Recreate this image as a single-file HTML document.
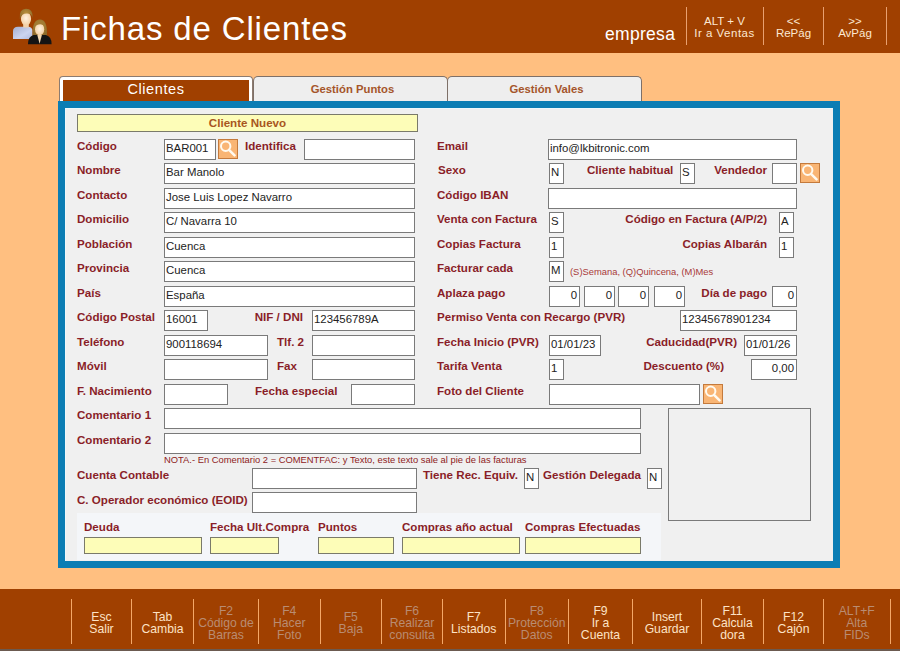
<!DOCTYPE html><html><head><meta charset="utf-8"><title>Fichas de Clientes</title><style>
*{margin:0;padding:0;box-sizing:border-box}
html,body{width:900px;height:651px;overflow:hidden;background:#ffbf80;font-family:"Liberation Sans",sans-serif}
#hd{position:absolute;left:0;top:0;width:900px;height:53px;background:#a04000}
.a{position:absolute}
.lb{position:absolute;font-size:11.6px;line-height:14px;font-weight:bold;color:#8a1e28;white-space:nowrap}
.in{position:absolute;background:#fff;border:1px solid #7a7a7a;font-size:11.4px;line-height:16px;color:#222;padding:0 2px 0 1px;white-space:nowrap;overflow:hidden}
.yl{position:absolute;background:#fdfdb8;border:1px solid #7a7a6a}
.sb{position:absolute;width:20px;height:20px;background:#f9b574;border:1px solid #c47a3c}
.sb svg{position:absolute;left:-1px;top:-1px}
.ft{position:absolute;top:0;height:62px;text-align:center;font-size:12.2px;line-height:12px;color:#fde3c6;white-space:nowrap}
.ft.d{color:#b98c72}
.sep{position:absolute;width:1px;background:#f4a868}
</style></head><body>
<div id="hd"></div>
<svg class="a" style="left:0;top:0" width="60" height="53" viewBox="0 0 60 53">
<defs><linearGradient id="g1" x1="0" y1="0" x2="1" y2="1"><stop offset="0" stop-color="#a4aed0"/><stop offset="0.6" stop-color="#ccd4f0"/><stop offset="1" stop-color="#b0bade"/></linearGradient>
<radialGradient id="sk" cx="0.5" cy="0.45" r="0.6"><stop offset="0" stop-color="#fff2e0"/><stop offset="1" stop-color="#f2cc9e"/></radialGradient>
<radialGradient id="hr" cx="0.5" cy="0.4" r="0.6"><stop offset="0" stop-color="#b8903c"/><stop offset="1" stop-color="#8e6a2a"/></radialGradient></defs>
<path d="M13 39 L13 31 Q13 27 18 26.8 L28 26.8 Q32.5 27 32.5 31 L32.5 39 Z" fill="url(#g1)"/>
<rect x="23.2" y="22" width="5.6" height="5.5" fill="#f2d2ac"/>
<ellipse cx="26" cy="18.8" rx="5.1" ry="6.8" fill="url(#sk)"/>
<path d="M19.8 19 Q18.8 8.8 26 8.8 Q33.2 8.8 32.6 18 Q31.5 13.2 26.5 13.6 Q22 13.5 19.8 19Z" fill="url(#hr)"/>
<path d="M32.6 36 Q32 19.6 40 19.6 Q47.6 19.6 47 36 Z" fill="url(#hr)"/>
<ellipse cx="39.6" cy="29.3" rx="4.6" ry="6.1" fill="url(#sk)"/>
<path d="M34.5 27 Q35 21.5 40 21.5 Q44.5 21.5 44.8 26 Q41 23 37 25 Q35.5 26 34.5 27Z" fill="#a47c34"/>
<path d="M28 44.2 Q28 36.5 33.5 35 L46 35 Q51.6 36.5 51.6 44.2 Z" fill="#141414"/>
<path d="M37.3 35 L39.6 43.8 L41.9 35 Z" fill="#f4d8b0"/>
</svg>
<div class="a" style="left:61px;top:8.5px;font-size:33px;line-height:40px;color:#fff;letter-spacing:0.85px;white-space:nowrap">Fichas de Clientes</div>
<div class="a" style="left:605px;top:21.7px;font-size:17.5px;line-height:24px;color:#fff;letter-spacing:0.3px;white-space:nowrap">empresa</div>
<div class="sep" style="left:686px;top:7px;height:38px;background:#e8a070"></div>
<div class="sep" style="left:763px;top:7px;height:38px;background:#e8a070"></div>
<div class="sep" style="left:823px;top:7px;height:38px;background:#e8a070"></div>
<div class="sep" style="left:886px;top:7px;height:38px;background:#e8a070"></div>
<div class="a" style="left:684.5px;width:80px;top:14.7px;text-align:center;font-size:11.5px;line-height:12.8px;color:#fde8d2;white-space:nowrap">ALT + V<br><span style="letter-spacing:0.5px">Ir a Ventas</span></div>
<div class="a" style="left:753.5px;width:80px;top:14.7px;text-align:center;font-size:11.5px;line-height:12.8px;color:#fde8d2;white-space:nowrap">&lt;&lt;<br>RePág</div>
<div class="a" style="left:815px;width:80px;top:14.7px;text-align:center;font-size:11.5px;line-height:12.8px;color:#fde8d2;white-space:nowrap">&gt;&gt;<br>AvPág</div>
<div class="a" style="left:59px;top:76px;width:194px;height:28px;background:#fff;border:1px solid #8c7b70;border-bottom:none;border-radius:4px 4px 0 0"></div>
<div class="a" style="left:63px;top:80px;width:186px;height:24px;background:#a04000"></div>
<div class="a" style="left:63px;top:81px;width:186px;text-align:center;font-size:14.5px;line-height:17px;color:#fff;letter-spacing:0.6px">Clientes</div>
<div class="a" style="left:253px;top:76px;width:195px;height:28px;background:#eeeeee;border:1px solid #7e7068;border-bottom:none;border-radius:5px 5px 0 0"></div>
<div class="a" style="left:253px;top:82px;width:195px;text-align:center;font-size:11.3px;line-height:14px;font-weight:bold;color:#a5552a;padding-left:4px">Gestión Puntos</div>
<div class="a" style="left:447px;top:76px;width:195px;height:28px;background:#eeeeee;border:1px solid #7e7068;border-bottom:none;border-radius:5px 5px 0 0"></div>
<div class="a" style="left:447px;top:82px;width:195px;text-align:center;font-size:11.3px;line-height:14px;font-weight:bold;color:#a5552a;padding-left:4px">Gestión Vales</div>
<div class="a" style="left:58px;top:101px;width:782px;height:467px;background:#0b7db4"></div>
<div class="a" style="left:65px;top:108px;width:768px;height:453px;background:#f0f0f0;border-left:1px solid #eef8fb;border-top:1px solid #eef8fb"></div>
<div class="yl" style="left:77px;top:114px;width:341px;height:18px"></div>
<div class="a" style="left:77px;top:116px;width:341px;text-align:center;font-size:11.6px;line-height:14px;font-weight:bold;color:#a8561e">Cliente Nuevo</div>
<div class="lb" style="left:77px;top:138.9px">Código</div>
<div class="lb" style="left:77px;top:163.4px">Nombre</div>
<div class="lb" style="left:77px;top:187.9px">Contacto</div>
<div class="lb" style="left:77px;top:212.4px">Domicilio</div>
<div class="lb" style="left:77px;top:236.9px">Población</div>
<div class="lb" style="left:77px;top:261.4px">Provincia</div>
<div class="lb" style="left:77px;top:285.9px">País</div>
<div class="lb" style="left:77px;top:310.4px">Código Postal</div>
<div class="lb" style="left:77px;top:334.9px">Teléfono</div>
<div class="lb" style="left:77px;top:359.4px">Móvil</div>
<div class="lb" style="left:77px;top:383.9px">F. Nacimiento</div>
<div class="lb" style="left:77px;top:408.4px">Comentario 1</div>
<div class="lb" style="left:77px;top:432.9px">Comentario 2</div>
<div class="in" style="left:164px;top:139px;width:52px;height:21px">BAR001</div>
<div class="sb" style="left:218px;top:139px"><svg width="20" height="20" viewBox="0 0 20 20"><circle cx="7.7" cy="7.3" r="4.7" fill="none" stroke="#fffaf0" stroke-width="2"/><line x1="11" y1="10.8" x2="16.6" y2="16.4" stroke="#fffaf0" stroke-width="2.5" stroke-linecap="round"/></svg></div>
<div class="lb" style="left:245px;top:138.9px">Identifica</div>
<div class="in" style="left:304px;top:139px;width:111px;height:21px"></div>
<div class="in" style="left:164px;top:163px;width:251px;height:21px">Bar Manolo</div>
<div class="in" style="left:164px;top:188px;width:251px;height:21px">Jose Luis Lopez Navarro</div>
<div class="in" style="left:164px;top:212px;width:251px;height:21px">C/ Navarra 10</div>
<div class="in" style="left:164px;top:237px;width:251px;height:21px">Cuenca</div>
<div class="in" style="left:164px;top:261px;width:251px;height:21px">Cuenca</div>
<div class="in" style="left:164px;top:286px;width:251px;height:21px">España</div>
<div class="in" style="left:164px;top:310px;width:44px;height:21px">16001</div>
<div class="lb" style="right:597px;top:310.4px">NIF / DNI</div>
<div class="in" style="left:312px;top:310px;width:103px;height:21px">123456789A</div>
<div class="in" style="left:164px;top:335px;width:104px;height:21px">900118694</div>
<div class="lb" style="left:277px;top:334.9px">Tlf. 2</div>
<div class="in" style="left:312px;top:335px;width:103px;height:21px"></div>
<div class="in" style="left:164px;top:359px;width:104px;height:21px"></div>
<div class="lb" style="left:277px;top:359.4px">Fax</div>
<div class="in" style="left:312px;top:359px;width:103px;height:21px"></div>
<div class="in" style="left:164px;top:384px;width:64px;height:21px"></div>
<div class="lb" style="left:255px;top:383.9px">Fecha especial</div>
<div class="in" style="left:351px;top:384px;width:64px;height:21px"></div>
<div class="in" style="left:164px;top:408px;width:477px;height:21px"></div>
<div class="in" style="left:164px;top:433px;width:477px;height:21px"></div>
<div class="a" style="left:164px;top:454px;font-size:9.4px;line-height:12px;color:#8e2222;white-space:nowrap">NOTA.- En Comentario 2 = COMENTFAC: y Texto, este texto sale al pie de las facturas</div>
<div class="lb" style="left:437px;top:138.9px">Email</div>
<div class="in" style="left:548px;top:139px;width:249px;height:21px">info@lkbitronic.com</div>
<div class="lb" style="left:438px;top:163.4px">Sexo</div>
<div class="in" style="left:549px;top:163px;width:15px;height:21px">N</div>
<div class="lb" style="left:587px;top:163.4px">Cliente habitual</div>
<div class="in" style="left:680px;top:163px;width:15px;height:21px">S</div>
<div class="lb" style="right:133px;top:163.4px">Vendedor</div>
<div class="in" style="left:772px;top:163px;width:25px;height:21px"></div>
<div class="sb" style="left:800px;top:163px"><svg width="20" height="20" viewBox="0 0 20 20"><circle cx="7.7" cy="7.3" r="4.7" fill="none" stroke="#fffaf0" stroke-width="2"/><line x1="11" y1="10.8" x2="16.6" y2="16.4" stroke="#fffaf0" stroke-width="2.5" stroke-linecap="round"/></svg></div>
<div class="lb" style="left:437px;top:187.9px">Código IBAN</div>
<div class="in" style="left:548px;top:188px;width:249px;height:21px"></div>
<div class="lb" style="left:437px;top:212.4px">Venta con Factura</div>
<div class="in" style="left:549px;top:212px;width:15px;height:21px">S</div>
<div class="lb" style="right:133px;top:212.4px">Código en Factura (A/P/2)</div>
<div class="in" style="left:779px;top:212px;width:15px;height:21px">A</div>
<div class="lb" style="left:437px;top:236.9px">Copias Factura</div>
<div class="in" style="left:549px;top:237px;width:15px;height:21px">1</div>
<div class="lb" style="right:133px;top:236.9px">Copias Albarán</div>
<div class="in" style="left:779px;top:237px;width:15px;height:21px">1</div>
<div class="lb" style="left:437px;top:261.4px">Facturar cada</div>
<div class="in" style="left:549px;top:261px;width:15px;height:21px">M</div>
<div class="a" style="left:570px;top:265.5px;font-size:9.4px;line-height:12px;color:#a83a3a;white-space:nowrap">(S)Semana, (Q)Quincena, (M)Mes</div>
<div class="lb" style="left:437px;top:285.9px">Aplaza pago</div>
<div class="in" style="left:549px;top:286px;width:31px;height:21px;text-align:right">0</div>
<div class="in" style="left:584px;top:286px;width:31px;height:21px;text-align:right">0</div>
<div class="in" style="left:618px;top:286px;width:31px;height:21px;text-align:right">0</div>
<div class="in" style="left:654px;top:286px;width:31px;height:21px;text-align:right">0</div>
<div class="lb" style="right:133px;top:285.9px">Día de pago</div>
<div class="in" style="left:772px;top:286px;width:25px;height:21px;text-align:right">0</div>
<div class="lb" style="left:437px;top:310.4px">Permiso Venta con Recargo (PVR)</div>
<div class="in" style="left:680px;top:310px;width:117px;height:21px">12345678901234</div>
<div class="lb" style="left:437px;top:334.9px">Fecha Inicio (PVR)</div>
<div class="in" style="left:549px;top:335px;width:52px;height:21px">01/01/23</div>
<div class="lb" style="right:163px;top:334.9px">Caducidad(PVR)</div>
<div class="in" style="left:744px;top:335px;width:53px;height:21px">01/01/26</div>
<div class="lb" style="left:437px;top:359.4px">Tarifa Venta</div>
<div class="in" style="left:549px;top:359px;width:15px;height:21px">1</div>
<div class="lb" style="right:176px;top:359.4px">Descuento (%)</div>
<div class="in" style="left:751px;top:359px;width:46px;height:21px;text-align:right">0,00</div>
<div class="lb" style="left:437px;top:383.9px">Foto del Cliente</div>
<div class="in" style="left:549px;top:384px;width:151px;height:21px"></div>
<div class="sb" style="left:703px;top:384px"><svg width="20" height="20" viewBox="0 0 20 20"><circle cx="7.7" cy="7.3" r="4.7" fill="none" stroke="#fffaf0" stroke-width="2"/><line x1="11" y1="10.8" x2="16.6" y2="16.4" stroke="#fffaf0" stroke-width="2.5" stroke-linecap="round"/></svg></div>
<div class="a" style="left:668px;top:408px;width:143px;height:113px;border:1px solid #7a7a7a"></div>
<div class="lb" style="left:77px;top:468.0px">Cuenta Contable</div>
<div class="in" style="left:252px;top:468px;width:165px;height:21px"></div>
<div class="lb" style="left:77px;top:492.5px">C. Operador económico (EOID)</div>
<div class="in" style="left:252px;top:492px;width:165px;height:21px"></div>
<div class="lb" style="left:423px;top:468.0px">Tiene Rec. Equiv.</div>
<div class="in" style="left:524px;top:468px;width:15px;height:21px">N</div>
<div class="lb" style="left:543px;top:468.0px">Gestión Delegada</div>
<div class="in" style="left:647px;top:468px;width:15px;height:21px">N</div>
<div class="a" style="left:77px;top:513px;width:584px;height:47px;background:#f4f6f9"></div>
<div class="lb" style="left:84px;top:520.0px">Deuda</div>
<div class="yl" style="left:84px;top:537px;width:118px;height:17px"></div>
<div class="lb" style="left:210px;top:520.0px">Fecha Ult.Compra</div>
<div class="yl" style="left:210px;top:537px;width:69px;height:17px"></div>
<div class="lb" style="left:318px;top:520.0px">Puntos</div>
<div class="yl" style="left:318px;top:537px;width:76px;height:17px"></div>
<div class="lb" style="left:402px;top:520.0px">Compras año actual</div>
<div class="yl" style="left:402px;top:537px;width:118px;height:17px"></div>
<div class="lb" style="left:525px;top:520.0px">Compras Efectuadas</div>
<div class="yl" style="left:525px;top:537px;width:116px;height:17px"></div>
<div class="a" style="left:0;top:589px;width:900px;height:62px;background:#a04000"></div>
<div class="a" style="left:0;top:649px;width:900px;height:2px;background:#6b5a50"></div>
<div class="sep" style="left:71px;top:599px;height:45px"></div>
<div class="sep" style="left:131px;top:599px;height:45px"></div>
<div class="sep" style="left:193px;top:599px;height:45px"></div>
<div class="sep" style="left:258px;top:599px;height:45px"></div>
<div class="sep" style="left:320px;top:599px;height:45px"></div>
<div class="sep" style="left:381px;top:599px;height:45px"></div>
<div class="sep" style="left:442px;top:599px;height:45px"></div>
<div class="sep" style="left:505px;top:599px;height:45px"></div>
<div class="sep" style="left:568px;top:599px;height:45px"></div>
<div class="sep" style="left:632px;top:599px;height:45px"></div>
<div class="sep" style="left:701px;top:599px;height:45px"></div>
<div class="sep" style="left:763px;top:599px;height:45px"></div>
<div class="sep" style="left:823px;top:599px;height:45px"></div>
<div class="sep" style="left:890px;top:599px;height:45px"></div>
<div class="ft" style="left:71.5px;width:60.0px;top:611.37px;height:auto">Esc<br>Salir</div>
<div class="ft" style="left:131.5px;width:62.0px;top:611.37px;height:auto">Tab<br>Cambia</div>
<div class="ft d" style="left:193.5px;width:65.0px;top:605.37px;height:auto">F2<br>Código de<br>Barras</div>
<div class="ft d" style="left:258.5px;width:61.5px;top:605.37px;height:auto">F4<br>Hacer<br>Foto</div>
<div class="ft d" style="left:320px;width:61.5px;top:611.37px;height:auto">F5<br>Baja</div>
<div class="ft d" style="left:381.5px;width:61.0px;top:605.37px;height:auto">F6<br>Realizar<br>consulta</div>
<div class="ft" style="left:442.5px;width:62.5px;top:611.37px;height:auto">F7<br>Listados</div>
<div class="ft d" style="left:505px;width:63.5px;top:605.37px;height:auto">F8<br>Protección<br>Datos</div>
<div class="ft" style="left:568.5px;width:64.0px;top:605.37px;height:auto">F9<br>Ir a<br>Cuenta</div>
<div class="ft" style="left:632.5px;width:69.0px;top:611.37px;height:auto">Insert<br>Guardar</div>
<div class="ft" style="left:701.5px;width:62.0px;top:605.37px;height:auto">F11<br>Calcula<br>dora</div>
<div class="ft" style="left:763.5px;width:60.0px;top:611.37px;height:auto">F12<br>Cajón</div>
<div class="ft d" style="left:823.5px;width:66.5px;top:605.37px;height:auto">ALT+F<br>Alta<br>FIDs</div>
</body></html>
